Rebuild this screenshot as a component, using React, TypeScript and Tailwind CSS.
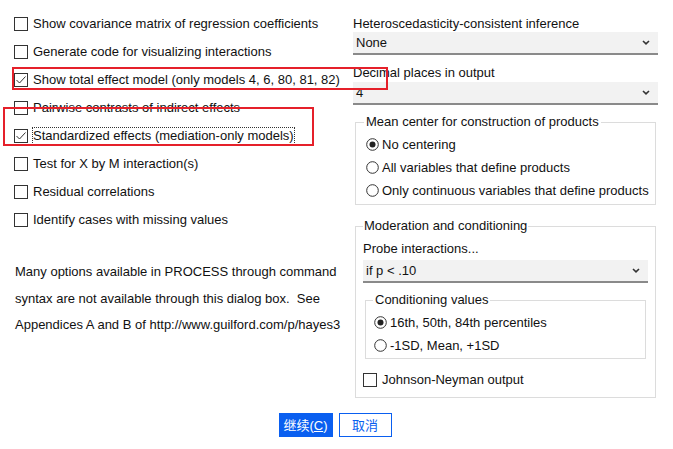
import React from 'react'

const font = { fontFamily: '"Liberation Sans", Arial, sans-serif' }

function Check({ checked }: { checked?: boolean }) {
  return (
    <span className="w-[14px] h-[14px] border border-[#333] bg-white flex items-center justify-center shrink-0">
      {checked && (
        <svg width="12" height="12" viewBox="0 0 12 12">
          <polyline points="1.5,6 4.5,9 10.5,2.5" fill="none" stroke="#333" strokeWidth="1" />
        </svg>
      )}
    </span>
  )
}

function Radio({ checked }: { checked?: boolean }) {
  return (
    <svg width="13" height="13" viewBox="0 0 13 13" className="shrink-0">
      <circle cx="6.5" cy="6.5" r="5.8" fill="white" stroke="#333" strokeWidth="1" />
      {checked && <circle cx="6.5" cy="6.5" r="3" fill="#222" />}
    </svg>
  )
}

function Chevron() {
  return (
    <svg width="8" height="5" viewBox="0 0 8 5">
      <polyline points="1,1 4,3.8 7,1" fill="none" stroke="#333" strokeWidth="1.6" />
    </svg>
  )
}

function Select({ value }: { value: string }) {
  return (
    <div className="h-[23px] bg-[#f2f2f2] border-b-2 border-[#8a8a8a] flex items-center justify-between pl-[3px] pr-[8px]">
      <span>{value}</span>
      <Chevron />
    </div>
  )
}

const leftOptions = [
  { label: 'Show covariance matrix of regression coefficients' },
  { label: 'Generate code for visualizing interactions' },
  { label: 'Show total effect model (only models 4, 6, 80, 81, 82)', checked: true },
  { label: 'Pairwise contrasts of indirect effects' },
  { label: 'Standardized effects (mediation-only models)', checked: true, focus: true },
  { label: 'Test for X by M interaction(s)' },
  { label: 'Residual correlations' },
  { label: 'Identify cases with missing values' },
]

export default function App() {
  return (
    <div className="relative w-[673px] h-[449px] bg-white text-[13px] text-[#111] overflow-hidden" style={font}>
      <div className="flex">
        {/* left column */}
        <div className="w-[353px] pl-[14px] pt-[10px]">
          {leftOptions.map((o) => (
            <div key={o.label} className="h-[28px] flex items-center gap-[5px]">
              <Check checked={o.checked} />
              <span className={o.focus ? 'outline outline-1 outline-dotted outline-[#333] leading-[16px]' : ''}>
                {o.label}
              </span>
            </div>
          ))}
          <div className="mt-[25px] pl-[1px] leading-[26.5px]">
            <p>Many options available in PROCESS through command</p>
            <p>syntax are not available through this dialog box.&nbsp; See</p>
            <p>Appendices A and B of http://www.guilford.com/p/hayes3</p>
          </div>
        </div>

        {/* right column */}
        <div className="w-[305px] pt-[15px]">
          <div className="h-[17px] leading-[17px]">Heteroscedasticity-consistent inference</div>
          <Select value="None" />
          <div className="h-[9px]" />
          <div className="h-[18px] leading-[18px]">Decimal places in output</div>
          <Select value="4" />

          <fieldset className="mt-[9px] ml-[2px] w-[301px] h-[91px] border border-[#dcdcdc] pl-[10px] pr-0">
            <legend className="px-[2px] -ml-[2px] leading-[16px]">Mean center for construction of products</legend>
            <div className="flex flex-col pt-[3px]">
              {['No centering', 'All variables that define products', 'Only continuous variables that define products'].map((t, i) => (
                <div key={t} className="h-[23px] flex items-center gap-[3px] whitespace-nowrap">
                  <Radio checked={i === 0} />
                  <span>{t}</span>
                </div>
              ))}
            </div>
          </fieldset>

          <fieldset className="mt-[13px] ml-[2px] w-[301px] h-[180px] border border-[#dcdcdc] px-[7px]">
            <legend className="px-[1px] leading-[16px]">Moderation and conditioning</legend>
            <div className="h-[26px] pt-[7px] leading-[16px]">Probe interactions...</div>
            <Select value="if p < .10" />
            <fieldset className="mt-[9px] mx-[2px] h-[67px] border border-[#dcdcdc] px-[8px]">
              <legend className="px-[2px] -ml-[1px] leading-[16px]">Conditioning values</legend>
              <div className="pt-[3px]">
                {['16th, 50th, 84th percentiles', '-1SD, Mean, +1SD'].map((t, i) => (
                  <div key={t} className="h-[23px] flex items-center gap-[3px]">
                    <Radio checked={i === 0} />
                    <span>{t}</span>
                  </div>
                ))}
              </div>
            </fieldset>
            <div className="mt-[9px] h-[24px] flex items-center gap-[5px]">
              <Check />
              <span>Johnson-Neyman output</span>
            </div>
          </fieldset>
        </div>
      </div>

      {/* buttons */}
      <div className="absolute left-0 right-0 top-[413px] flex justify-center gap-[6px] pr-[3px]">
        <button className="w-[54px] h-[24px] bg-[#0a5ff0] text-white text-[13px] leading-none" style={{ fontFamily: '"Liberation Sans", "Noto Sans CJK SC", sans-serif' }}>
          继续(<span className="underline">C</span>)
        </button>
        <button className="w-[53px] h-[24px] bg-white border border-[#0a5ff0] text-[#0a5ff0] text-[13px] leading-none" style={{ fontFamily: '"Liberation Sans", "Noto Sans CJK SC", sans-serif' }}>
          取消
        </button>
      </div>

      {/* red annotation boxes */}
      <div className="absolute z-10 left-[12px] right-[285px] top-[67px] h-[23px] border-2 border-[#e5202a]" />
      <div className="absolute z-10 left-[3px] top-[107px] w-[311px] h-[39px] border-2 border-[#e5202a]" />
    </div>
  )
}
